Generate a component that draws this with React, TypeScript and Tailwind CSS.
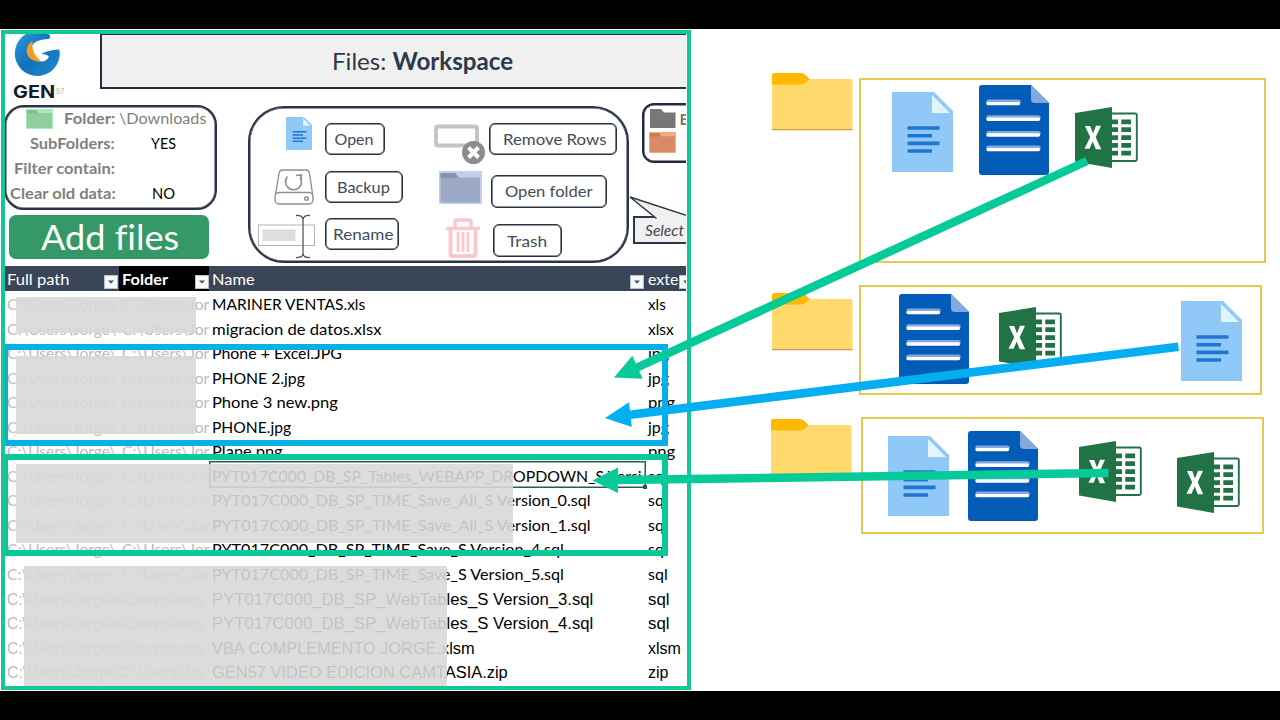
import { useLayoutEffect, useRef } from "react";
import type { ReactNode } from "react";

/* Squeezes a single line of text to a given width. */
function Fit({ w, children, className = "" }: { w: number; children: ReactNode; className?: string }) {
  const ref = useRef<HTMLSpanElement>(null);
  useLayoutEffect(() => {
    const el = ref.current;
    if (el) el.style.transform = `scaleX(${w / el.offsetWidth})`;
  }, [w]);
  return (
    <span className={`block shrink-0 whitespace-nowrap ${className}`} style={{ width: w }}>
      <span ref={ref} className="inline-block origin-left">
        {children}
      </span>
    </span>
  );
}

function LightDoc({ className = "" }: { className?: string }) {
  return (
    <svg viewBox="0 0 61 80" preserveAspectRatio="none" className={className}>
      <path d="M0 0H42L61 19V80H0Z" fill="#90c8f8" />
      <path d="M40 3V21H58Z" fill="#e1f5fe" />
      <path d="M15.500 36H47.500M15.500 43.700H40M15.500 51.400H47.500M15.500 59H40" stroke="#1d76d0" strokeWidth="3.600" />
    </svg>
  );
}

function DarkDoc({ className = "" }: { className?: string }) {
  return (
    <svg viewBox="0 0 70 90" className={className}>
      <path d="M3 0H52L70 18V87Q70 90 67 90H3Q0 90 0 87V3Q0 0 3 0Z" fill="#035cb8" />
      <path d="M52 0L70 18H56Q52 18 52 14Z" fill="#84a9de" />
      <g strokeLinecap="round">
        <path d="M9.500 16.800H39.500M9.500 32.500H59.500M9.500 48.200H59.500M9.500 62.800H59.500" stroke="#84a9de" strokeWidth="4.500" />
        <path d="M9 18.600H39.500M9 34.300H59.500M9 50H59.500M9 64.600H59.500" stroke="#fff" strokeWidth="3.400" />
      </g>
    </svg>
  );
}

function ExcelIcon({ className = "" }: { className?: string }) {
  return (
    <svg viewBox="0 0 63 61" className={className}>
      <rect x="30" y="6.500" width="31.800" height="47.500" rx="1.500" fill="#fff" stroke="#217346" strokeWidth="1.900" />
      <path
        d="M37 12.500h6v4.800h-6zM46.300 12.500h9.700v4.800h-9.700zM37 20.300h6v4.800h-6zM46.300 20.300h9.700v4.800h-9.700zM37 28.200h6V33h-6zM46.300 28.200h9.700V33h-9.700zM37 36h6v4.800h-6zM46.300 36h9.700v4.800h-9.700zM37 43.800h6v4.800h-6zM46.300 43.800h9.700v4.800h-9.700z"
        fill="#217346"
      />
      <path d="M0 6L37 0V61L0 54.500Z" fill="#217346" />
      <path d="M10 19H15.200L18 26.500L21 18.700H26L20.700 30.300L26.200 42.300H20.800L17.700 34.500L14.500 41.800H9.500L15.200 30.300Z" fill="#fff" />
    </svg>
  );
}

function YellowFolder({ className = "" }: { className?: string }) {
  return (
    <svg viewBox="0 0 81 58" className={`h-[58px] w-[81px] shrink-0 ${className}`}>
      <path d="M0 6H78.500Q80.500 6 80.500 8V57H0Z" fill="#ffd96b" />
      <path d="M0 2Q0 0 2 0H29Q32 0 34 2.500L37.500 6L34 9.500Q32 11.500 29 11.500H0Z" fill="#ffb902" />
      <path d="M0 56.700H80.500" stroke="#b98d3c" strokeWidth="1" />
    </svg>
  );
}

function SmallFolder({ back, front, tab, className = "" }: { back: string; front: string; tab: string; className?: string }) {
  return (
    <svg viewBox="0 0 43 33" preserveAspectRatio="none" className={`block shrink-0 ${className}`}>
      <rect width="43" height="33" fill={back} />
      <path d="M1.500 2H16L20 6.500H41V31.500H1.500Z" fill={front} />
      <path d="M1.500 2H16L19.500 6.500L1.500 7Z" fill={tab} />
    </svg>
  );
}

function Logo() {
  return (
    <div className="w-[95px] shrink-0">
      <svg viewBox="0 1 46 45" className="ml-[9px] block h-[45px] w-[46px]">
        <defs>
          <linearGradient id="logoBlue" x1="0" y1="0" x2="1" y2="1">
            <stop offset="0" stopColor="#2f9be0" />
            <stop offset="0.500" stopColor="#1272b8" />
            <stop offset="1" stopColor="#2389cf" />
          </linearGradient>
        </defs>
        <circle cx="23.300" cy="21.500" r="22.500" fill="url(#logoBlue)" />
        <path d="M36 -1L35.500 2.500Q37.500 5.500 34.500 7C25 7.500 19 10 17.500 15C16.500 20 19 26 24 29C29 30.500 33 28.500 35 25C34 23 31.500 22 27 22C33 19 40 17.500 47 17.500V-1Z" fill="#fff" />
        <path d="M18.500 8.500C11 14 10.500 24 18.500 28Q22 30 28 29.500C21.500 25.500 17.500 19 18.500 8.500Z" fill="#f59a22" />
      </svg>
      <div className="mt-[5px] ml-[8px] flex h-[18px] items-center font-['Inter'] text-[17px] leading-[18px] font-bold text-[#101d2c]">
        <Fit w={42}>GEN</Fit>
        <span className="ml-[1px] text-[7px] font-normal text-[#e2a65f]">57</span>
      </div>
    </div>
  );
}

function ActionButton({ label, w, className }: { label: string; w: number; className: string }) {
  return (
    <button
      className={`flex shrink-0 items-center justify-center rounded-[6px] border border-[#2b3042] pr-[2px] text-[16px] leading-none text-[#444b5a] shadow-[inset_0_0_0_0.6px_#2b3042] ${className}`}
    >
      <Fit w={w}>{label}</Fit>
    </button>
  );
}

function DriveIcon() {
  return (
    <svg viewBox="0 0 40 36" className="mr-[11px] h-[36px] w-[40px] shrink-0" fill="none" stroke="#8d9096" strokeWidth="1.400">
      <path d="M1.500 26L5 4.500Q5.500 1 9 1H31.500Q35 1 35.500 4.500L38.700 26" />
      <rect x="1" y="23.500" width="38" height="11.500" rx="4" />
      <circle cx="32.500" cy="29.500" r="1.800" />
      <path d="M13.500 7.500A8 8 0 1 0 26 8M22 6.500L27.500 6L27 12" strokeWidth="1.700" />
    </svg>
  );
}

function RenameIcon() {
  return (
    <svg viewBox="0 0 58 45" className="mr-[9px] h-[45px] w-[58px] shrink-0" fill="none">
      <rect x="0.500" y="11" width="56" height="20.500" stroke="#b3b3b3" />
      <rect x="4.500" y="15.500" width="33" height="11.500" fill="#dedede" />
      <path d="M45 6V39" stroke="#555" strokeWidth="1.300" />
      <path d="M38 1.500Q45 1 45 6Q45 1 52 1.500M38 43.500Q45 44 45 39Q45 44 52 43.500" stroke="#555" strokeWidth="1.300" />
    </svg>
  );
}

function RemoveRowsIcon() {
  return (
    <svg viewBox="0 0 52 41" className="h-[41px] w-[52px]" fill="none">
      <rect x="2" y="2.500" width="41" height="19" rx="2" stroke="#c4c4c4" strokeWidth="4" />
      <circle cx="39.500" cy="28.500" r="11.500" fill="#8c8c8c" />
      <path d="M34.500 23.500L44.500 33.500M44.500 23.500L34.500 33.500" stroke="#fff" strokeWidth="4" />
    </svg>
  );
}

function TrashIcon() {
  return (
    <svg viewBox="0 0 34 40" className="h-[40px] w-[34px]" fill="none" stroke="#fbc8cc">
      <path d="M0 10.500H34" strokeWidth="3.500" />
      <path d="M9 10V4Q9 2 11 2H23Q25 2 25 4V10" strokeWidth="3.500" />
      <path d="M4.500 11V36Q4.500 38 6.500 38H27.500Q29.500 38 29.500 36V11" strokeWidth="3.800" />
      <path d="M12 14V34M17 14V34M22 14V34" strokeWidth="2.800" />
    </svg>
  );
}

function Dropdown({ className = "" }: { className?: string }) {
  return (
    <span className={`flex h-[14px] w-[14px] shrink-0 items-center justify-center border border-[#b9c3d0] bg-[#f7f8fa] ${className}`}>
      <svg viewBox="0 0 6 4" className="h-[4px] w-[6px]">
        <path d="M0 0.500H6L3 3.700Z" fill="#555" />
      </svg>
    </span>
  );
}

const settings = [
  { label: "SubFolders:", w: 85, value: "YES", vw: 25 },
  { label: "Filter contain:", w: 101, value: "", vw: 0 },
  { label: "Clear old data:", w: 105.5, value: "NO", vw: 23 },
];

type Row = { name: string; w: number; ext: string; ew: number; arial?: boolean; path?: string };
const rows: Row[] = [
  { name: "MARINER VENTAS.xls", w: 153.5, ext: "xls", ew: 18 },
  { name: "migracion de datos.xlsx", w: 169.5, ext: "xlsx", ew: 26 },
  { name: "Phone + Excel.JPG", w: 130, ext: "jpg", ew: 21 },
  { name: "PHONE 2.jpg", w: 92.5, ext: "jpg", ew: 21 },
  { name: "Phone 3 new.png", w: 126, ext: "png", ew: 27 },
  { name: "PHONE.jpg", w: 79, ext: "jpg", ew: 21 },
  { name: "Plane.png", w: 71, ext: "png", ew: 27 },
  { name: "PYT017C000_DB_SP_Tables_WEBAPP_DROPDOWN_S Versi", w: 430, ext: "sql", ew: 20 },
  { name: "PYT017C000_DB_SP_TIME_Save_All_S Version_0.sql", w: 378.5, ext: "sql", ew: 20 },
  { name: "PYT017C000_DB_SP_TIME_Save_All_S Version_1.sql", w: 378.5, ext: "sql", ew: 20 },
  { name: "PYT017C000_DB_SP_TIME_Save_S Version_4.sql", w: 351.5, ext: "sql", ew: 20 },
  { name: "PYT017C000_DB_SP_TIME_Save_S Version_5.sql", w: 351.5, ext: "sql", ew: 20 },
  { name: "PYT017C000_DB_SP_WebTables_S Version_3.sql", w: 381, ext: "sql", ew: 21, arial: true, path: "C:\\Users\\Jorge\\n\\Downloads" },
  { name: "PYT017C000_DB_SP_WebTables_S Version_4.sql", w: 381, ext: "sql", ew: 21, arial: true, path: "C:\\Users\\Jorge\\n\\Downloads" },
  { name: "VBA COMPLEMENTO JORGE.xlsm", w: 263, ext: "xlsm", ew: 33, arial: true, path: "C:\\Users\\Jorge\\n\\Downloads" },
  { name: "GEN57 VIDEO EDICION CAMTASIA.zip", w: 296, ext: "zip", ew: 20, arial: true, path: "C:\\Users\\Jorge\\C:\\Users\\Jor" },
];

function FileRow({ row }: { row: Row }) {
  return (
    <div className={`flex h-[24.530px] shrink-0 items-center text-[16px] leading-none text-black ${row.arial ? "pt-[3px] font-['Liberation_Sans']" : ""}`}>
      <div className="flex w-[207px] shrink-0 pl-[1.500px] text-[#bcbcbc]">
        {row.path ? (
          <Fit w={198}>{row.path}</Fit>
        ) : (
          <>
            <Fit w={109}>C:\Users\Jorge\</Fit>
            <Fit w={87} className="ml-[6px]">C:\Users\Jor</Fit>
          </>
        )}
      </div>
      <div className="w-[436px] shrink-0">
        <Fit w={row.w}>{row.name}</Fit>
      </div>
      <Fit w={row.ew}>{row.ext}</Fit>
    </div>
  );
}

function Workspace() {
  return (
    <section className="flex h-[662px] w-[686px] shrink-0 flex-col overflow-hidden pt-[4px] pl-[5px]">
      <header className="flex h-[55.500px] shrink-0">
        <Logo />
        <h1 className="flex w-[640px] shrink-0 items-center border-2 border-[#222d40] bg-[#f0f0f0] pl-[230px] text-[24px] text-[#2d384b]">
          <Fit w={181}>
            Files: <b>Workspace</b>
          </Fit>
        </h1>
      </header>

      <div className="flex h-[177.500px] shrink-0">
        <div className="w-[243px] shrink-0 pt-[16.500px]">
          <div className="-ml-px h-[104.500px] w-[213px] rounded-[20px] border-2 border-[#2a3447] text-[16px] leading-none text-[#7f7f7f] shadow-[inset_0_0_0_0.5px_#2a3447]">
            <div className="flex h-[23px] items-center">
              <SmallFolder back="#a8eab8" front="#90ce9f" tab="#83bc91" className="mt-[1px] ml-[20px] h-[20px] w-[27px]" />
              <Fit w={51} className="-mt-[1px] ml-[11px] font-bold">Folder:</Fit>
              <Fit w={87} className="-mt-[1px] ml-[3.500px]">\Downloads</Fit>
            </div>
            {settings.map((s) => (
              <div key={s.label} className="flex h-[25px] items-center">
                <div className="flex w-[109px] shrink-0 justify-end font-bold">
                  <Fit w={s.w}>{s.label}</Fit>
                </div>
                <div className="flex w-[97px] justify-center text-black">{s.value && <Fit w={s.vw}>{s.value}</Fit>}</div>
              </div>
            ))}
          </div>
          <button className="mt-[5px] ml-[4px] flex h-[44.500px] w-[200px] items-center justify-center rounded-[7px] bg-[#349966] pt-[1px] pr-[4px] text-[34.500px] leading-none text-white [font-variant-ligatures:none]">
            <Fit w={138}>Add files</Fit>
          </button>
        </div>

        <div className="mt-[17px] flex h-[157.500px] w-[380.500px] shrink-0 rounded-[36px] border-2 border-[#2a3447] shadow-[inset_0_0_0_0.5px_#2a3447]">
          <div className="flex w-[184px] shrink-0 flex-col">
            <div className="ml-[35.500px] flex h-[44px] items-start pt-[9px]">
              <LightDoc className="mr-[13.500px] h-[33px] w-[26px]" />
              <ActionButton label="Open" w={39} className="mt-[6px] h-[32px] w-[60px]" />
            </div>
            <div className="mt-[17.500px] ml-[24px] flex h-[38px] items-start">
              <DriveIcon />
              <ActionButton label="Backup" w={53} className="mt-[1.500px] h-[32px] w-[78px]" />
            </div>
            <div className="mt-[6.500px] ml-[8px] flex h-[45px] items-start">
              <RenameIcon />
              <ActionButton label="Rename" w={60} className="mt-[4.500px] h-[32px] w-[74px]" />
            </div>
          </div>
          <div className="flex w-[55px] shrink-0 flex-col pt-[16px]">
            <RemoveRowsIcon />
            <SmallFolder back="#c3d0ea" front="#9daac6" tab="#8592ae" className="mt-[6.500px] ml-[5px] h-[33px] w-[43px]" />
            <div className="mt-[14px] ml-[12px]">
              <TrashIcon />
            </div>
          </div>
          <div className="flex flex-col pt-[15px]">
            <ActionButton label="Remove Rows" w={103} className="h-[32.500px] w-[128px]" />
            <ActionButton label="Open folder" w={88} className="mt-[19.500px] ml-[1.500px] h-[33px] w-[116px]" />
            <ActionButton label="Trash" w={40} className="mt-[16.500px] ml-[3.500px] h-[33px] w-[69px]" />
          </div>
        </div>

        <div className="shrink-0 pt-[14px]">
          <div className="ml-[13px] h-[60px] w-[120px] rounded-[12px] border-2 border-[#222c3d] pt-[4px] pl-[6px] shadow-[inset_0_0_0_0.5px_#222c3d]">
            <div className="flex h-[20px] items-center text-[16px] leading-none font-bold text-[#777]">
              <svg viewBox="0 0 26 20" className="h-[20px] w-[26px]">
                <path d="M0 0H11L14 3.500H25.500V19H0Z" fill="#777" />
              </svg>
              <span className="ml-[4px]">E</span>
            </div>
            <SmallFolder back="#f2aa80" front="#d98a68" tab="#c87855" className="mt-[3.500px] -ml-[1px] h-[21px] w-[27px]" />
          </div>
          <div className="relative mt-[53px] ml-[4px] flex h-[28px] w-[120px] items-center border-2 border-[#2d3546] bg-[#f0f0f0] pl-[10px] text-[16px] leading-none text-[#3f4653] italic">
            <Fit w={39}>Select</Fit>
            <svg viewBox="0 0 70 24" className="absolute -top-[22px] -left-[6px] h-[24px] w-[70px]">
              <path d="M28.500 24L1 1L64 21.500V24Z" fill="#f0f0f0" />
              <path d="M27.500 22.500L1 1L64 21.500" fill="none" stroke="#2d3546" strokeWidth="1.500" />
            </svg>
          </div>
        </div>
      </div>

      <div className="flex h-[24.500px] shrink-0 bg-[#3b4558] text-[16px] leading-none text-white">
        <div className="flex w-[113.500px] shrink-0 items-center pt-[2px] pl-[1.500px]">
          <Fit w={63}>Full path</Fit>
          <Dropdown className="mt-[5px] mr-[0.500px] ml-auto" />
        </div>
        <div className="flex w-[90.500px] shrink-0 items-center bg-black pt-[2px] pl-[3.500px] font-bold">
          <Fit w={46}>Folder</Fit>
          <Dropdown className="mt-[5px] mr-[0.500px] ml-auto" />
        </div>
        <div className="flex w-[435.500px] shrink-0 items-center pt-[2px] pl-[3px]">
          <Fit w={43}>Name</Fit>
          <Dropdown className="mt-[5px] mr-[0.500px] ml-auto" />
        </div>
        <div className="flex w-[60px] shrink-0 items-center pt-[2px] pl-[3.500px]">
          <Fit w={30}>exte</Fit>
          <Dropdown className="mt-[5px] ml-px" />
        </div>
      </div>
      <div className="flex shrink-0 flex-col pt-[1.500px]">
        {rows.map((row) => (
          <FileRow key={row.name} row={row} />
        ))}
      </div>
    </section>
  );
}

function Diagram() {
  return (
    <section className="ml-[85px] flex w-[509px] shrink-0 flex-col">
      <div className="flex h-[255.500px] items-start pt-[44px]">
        <YellowFolder className="ml-[1px]" />
        <div className="relative mt-[5px] ml-[6px] h-[184.500px] w-[407px] border-2 border-[#e8c84c]">
          <LightDoc className="absolute top-[11.500px] left-[30.500px] h-[80px] w-[61px]" />
          <DarkDoc className="absolute top-[5px] left-[117.500px] h-[90px] w-[70px]" />
          <ExcelIcon className="absolute top-[27px] left-[213.500px] h-[61px] w-[63px]" />
        </div>
      </div>
      <div className="flex h-[132.500px] items-start">
        <YellowFolder className="mt-[8.500px] ml-[0.500px]" />
        <div className="relative ml-[6.500px] h-[110.500px] w-[403px] border-2 border-[#e8c84c]">
          <DarkDoc className="absolute top-[7.500px] left-[38px] h-[90px] w-[70px]" />
          <ExcelIcon className="absolute top-[20.500px] left-[138px] h-[61px] w-[63px]" />
          <LightDoc className="absolute top-[14.500px] left-[320px] h-[80px] w-[61px]" />
        </div>
      </div>
      <div className="flex items-start">
        <YellowFolder className="mt-[2px]" />
        <div className="relative ml-[8.500px] h-[116.500px] w-[403px] border-2 border-[#e8c84c]">
          <LightDoc className="absolute top-[17px] left-[25px] h-[80px] w-[61px]" />
          <DarkDoc className="absolute top-[12px] left-[105.500px] h-[90px] w-[70px]" />
          <ExcelIcon className="absolute top-[22px] left-[216.500px] h-[61px] w-[63px]" />
          <ExcelIcon className="absolute top-[33px] left-[314.500px] h-[61px] w-[63px]" />
        </div>
      </div>
    </section>
  );
}

function Annotations() {
  return (
    <>
      <div className="absolute top-[461px] left-[208.500px] h-[27px] w-[437.500px] border border-[#23624a] shadow-[inset_0_0_0_0.5px_#23624a]" />
      <div className="absolute top-[485px] left-[642.500px] h-[4px] w-[4px] bg-[#23624a]" />
      <div className="absolute top-[297px] left-[15.500px] h-[36px] w-[180px] bg-[#d8d8d8]/90" />
      <div className="absolute top-[356px] left-[15.500px] h-[77.500px] w-[180px] bg-[#d8d8d8]/90" />
      <div className="absolute top-[464px] left-[15.500px] h-[79px] w-[497.500px] bg-[#d8d8d8]/90" />
      <div className="absolute top-[566px] left-[24px] h-[120px] w-[423px] bg-[#d8d8d8]/90" />
      <div className="absolute top-[344px] left-[2px] h-[102px] w-[666px] border-[6px] border-[#08aeea]" />
      <div className="absolute top-[454px] left-[2px] h-[102px] w-[666px] border-[6px] border-[#0bc899]" />
      <div className="absolute top-[30px] left-[1px] h-[660px] w-[689.500px] border-4 border-[#17c59a]" />
      <svg viewBox="0 0 1280 720" className="absolute top-0 left-0 h-[720px] w-[1280px]">
        <path d="M636 368L1087 161" stroke="#06cb98" strokeWidth="8.500" />
        <path d="M614 377.500L632.300 355.700L642.700 378.700Z" fill="#06cb98" />
        <path d="M628 415L1178.500 346.700" stroke="#05aef0" strokeWidth="8.500" />
        <path d="M605 418L629 402.300L631.800 427Z" fill="#05aef0" />
        <path d="M616 480L1108.500 473" stroke="#06cb98" strokeWidth="8.500" />
        <path d="M592.500 480.500L618 467.500V493Z" fill="#06cb98" />
      </svg>
    </>
  );
}

export default function App() {
  return (
    <main className="relative h-[720px] w-[1280px] overflow-hidden bg-black pt-[29px] font-['Lato','Noto_Sans',sans-serif]">
      <div className="flex h-[662px] bg-white">
        <Workspace />
        <Diagram />
      </div>
      <Annotations />
    </main>
  );
}
